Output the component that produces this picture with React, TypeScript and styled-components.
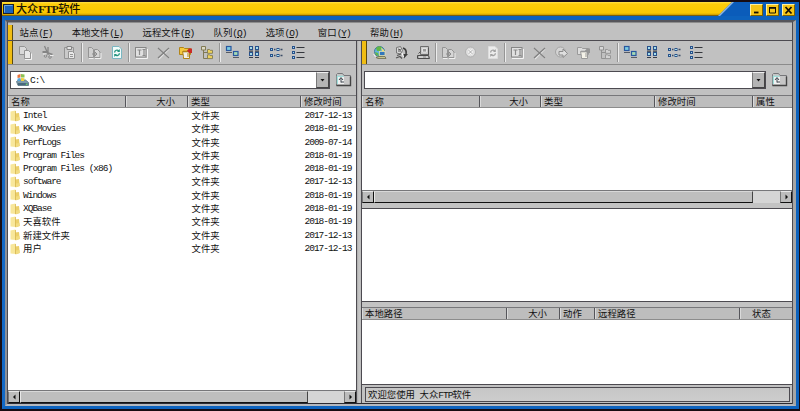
import React from 'react';
import styled, { createGlobalStyle, css } from 'styled-components';

const GlobalStyle = createGlobalStyle`
  * { box-sizing: border-box; }
  html, body { margin: 0; padding: 0; overflow: hidden; }
  body {
    font-family: "Noto Sans CJK SC", sans-serif;
    font-size: 9.4px;
    line-height: 13px;
    color: #111;
    background: #1a1214;
  }
`;

const face = '#c1c1c1';
const line = '#4c4a50';

const Window = styled.div`
  width: 800px;
  height: 411px;
  display: flex;
  flex-direction: column;
  background: #170c12;
  padding: 2px 1px 2px 2px;
`;

const TitleBar = styled.header`
  height: 14px;
  flex: none;
  display: flex;
  background: #0b5cba;
`;

const TitleCaption = styled.div`
  width: 732px;
  height: 14px;
  display: flex;
  align-items: center;
  padding-left: 1px;
  gap: 2px;
  background: linear-gradient(#ffe14a 0, #fccb0a 2px, #fac800 11px, #c99a00 13px, #2b2418 14px);
  clip-path: polygon(0 0, 730px 0, 716px 14px, 0 14px);
  font-weight: 500;
  font-size: 11.1px;
  line-height: 13px;
  color: #1c1503;
`;

const TitleText = styled.span`
  white-space: nowrap;
`;

const TitleLatin = styled.b`
  font-family: "Liberation Serif", serif;
  font-size: 11.4px;
  letter-spacing: -0.5px;
`;

const TitleEdge = styled.div`
  width: 16px;
  height: 14px;
  margin-left: -16px;
  background: #8fb4e2;
  clip-path: polygon(14px 0, 16px 0, 2px 14px, 0 14px);
`;

const WindowButtons = styled.div`
  display: flex;
  gap: 3px;
  padding: 2px 0 0 16px;
`;

const WindowButton = styled.button`
  width: 13px;
  height: 12px;
  padding: 0;
  border: 1px solid;
  border-color: #fff0a0 #7d6200 #7d6200 #fff0a0;
  background: #f5c518;
  display: flex;
  align-items: center;
  justify-content: center;
`;

const Frame = styled.div`
  flex: 1;
  min-height: 0;
  display: flex;
  background: #0d62bd;
  border: solid #0d62bd;
  border-width: 4px 3px 3px 3px;
  border-left-color: #1268c6;
`;

const Client = styled.div`
  flex: 1;
  display: flex;
  flex-direction: column;
  background: ${face};
  border: solid;
  border-width: 2px 3px 2px 2px;
  border-color: #55555b #a5a5a5 #b4b8bf #8c9098;
  box-shadow: inset 1px 0 0 ${line}, inset -1px 0 0 ${line}, inset 0 -1px 0 #2c2a30;
  padding: 0 1px 1px 1px;
`;

const Grip = styled.div`
  width: 5px;
  flex: none;
  align-self: stretch;
  background: #f0bd13;
  border-right: 1px solid #5b4a10;
`;

const MenuBar = styled.nav`
  height: 19px;
  flex: none;
  display: flex;
  align-items: stretch;
  border-top: 1px solid #8d8d8d;
  border-bottom: 1px solid ${line};
  padding-top: 2px;
`;

const MenuList = styled.div`
  display: flex;
  gap: 19.3px;
  padding-left: 6.5px;
  align-items: center;
  white-space: nowrap;
`;

const Latin = styled.span`
  font-family: "Liberation Mono", monospace;
  font-size: 9.5px;
  letter-spacing: -1.01px;
`;

const Workspace = styled.main`
  flex: 1;
  min-height: 0;
  display: flex;
`;

const Pane = styled.section<{ $width?: number }>`
  ${(p) => (p.$width ? css`width: ${p.$width}px; flex: none;` : css`flex: 1;`)}
  display: flex;
  flex-direction: column;
  min-width: 0;
`;

const Splitter = styled.div`
  width: 6px;
  flex: none;
  border: solid ${line};
  border-width: 0 1px;
  background: linear-gradient(90deg, #aaa, #c8c8c8 2px, #bcbcbc);
`;

const ToolBar = styled.div`
  height: 24px;
  flex: none;
  display: flex;
  align-items: center;
  border-bottom: 1px solid #8b8b8b;
`;

const Tools = styled.div`
  display: flex;
  align-items: center;
  padding: 0 0 1px 1px;
`;

const ToolButton = styled.button`
  width: 22px;
  height: 22px;
  padding: 0;
  border: 0;
  background: none;
  display: flex;
  align-items: center;
  justify-content: center;
`;

const Divider = styled.div`
  width: 2px;
  margin: 0 0.6px;
  height: 19px;
  border-left: 1px solid #959595;
  border-right: 1px solid #ececec;
`;

const AddressRow = styled.div`
  height: 30px;
  flex: none;
  display: flex;
  align-items: flex-start;
  padding: 6px 4px 0 2px;
  gap: 5px;
`;

const AddressBox = styled.div`
  flex: 1;
  height: 18px;
  display: flex;
  align-items: center;
  background: #fff;
  border: 1px solid ${line};
  padding-left: 4px;
  gap: 1px;
`;

const AddressText = styled.div`
  flex: 1;
`;

const DropButton = styled.button`
  width: 13px;
  height: 16px;
  padding: 0;
  border: solid;
  border-width: 1px;
  border-color: #f0f0f0 #444 #444 #777;
  background: #b4b4b4;
  display: flex;
  align-items: center;
  justify-content: center;
`;

const UpButton = styled.button`
  width: 17px;
  height: 17px;
  padding: 0;
  border: 0;
  background: none;
`;

const HeaderRow = styled.div<{ $columns: string }>`
  height: 13px;
  flex: none;
  display: grid;
  grid-template-columns: ${(p) => p.$columns};
  border-top: 1px solid #77777a;
  border-bottom: 1px solid #8c8c8c;
  background: #bdbdbd;
`;

const HeaderCell = styled.div<{ $pad?: number; $right?: boolean }>`
  border-right: 1px solid #55555a;
  box-shadow: inset 1px 0 0 #dadada;
  padding: 0 ${(p) => (p.$right ? 12 : 0)}px 0 ${(p) => p.$pad ?? 3}px;
  text-align: ${(p) => (p.$right ? 'right' : 'left')};
  line-height: 11px;
  white-space: nowrap;
  &:last-child { border-right: 0; }
`;

const FileList = styled.div`
  flex: 1;
  min-height: 0;
  background: #fff;
  padding-top: 1px;
`;

const FileRow = styled.div`
  height: 13.3px;
  line-height: 13.3px;
  display: grid;
  grid-template-columns: 183.5px 113px 1fr;
  white-space: nowrap;
`;

const FileName = styled.div`
  display: flex;
  align-items: center;
  padding-left: 2px;
  gap: 3px;
`;

const ScrollTrack = styled.div`
  height: 13px;
  flex: none;
  display: flex;
  justify-content: space-between;
  background: #d5d5d5;
  border-top: 1px solid #77777a;
`;

const ScrollArrow = styled.button`
  width: 12px;
  flex: none;
  padding: 0;
  border: 1px solid;
  border-color: #e8e8e8 #111 #111 #777;
  background: #bcbcbc;
  display: flex;
  align-items: center;
  justify-content: center;
`;

const ScrollThumb = styled.div<{ $width: number }>`
  width: ${(p) => p.$width}px;
  margin-right: auto;
  border: 1px solid;
  border-color: #d8d8d8 #444 #111 #e8e8e8;
  background: #bebebe;
`;

const Band = styled.div`
  height: 6px;
  flex: none;
  background: #c3c3c3;
  border-bottom: 1px solid ${line};
`;

const LogView = styled.div`
  height: 92px;
  flex: none;
  background: #fff;
`;

const QueueBand = styled.div`
  height: 6px;
  flex: none;
  background: #c3c3c3;
  border-top: 1px solid ${line};
`;

const Queue = styled.div`
  height: 64px;
  flex: none;
  background: #fff;
`;

const StatusBar = styled.footer`
  height: 19px;
  flex: none;
  background: #c1c1c1;
  border-top: 1px solid ${line};
  padding: 2px 2px 1px 3px;
`;

const StatusCell = styled.div`
  height: 15px;
  border: 1px solid ${line};
  background: linear-gradient(#c6c6c6, #cdcdcd);
  padding-left: 2px;
  line-height: 13px;
  white-space: pre;
`;

const Svg = styled.svg`
  display: block;
  overflow: visible;
`;

type IconName =
  | 'copy' | 'cut' | 'paste' | 'find' | 'refresh' | 'refreshOff' | 'rename' | 'delete'
  | 'props' | 'propsOff' | 'tree' | 'treeOff' | 'large' | 'small' | 'list' | 'detail'
  | 'globe' | 'plug' | 'host' | 'stop' | 'transfer';

const g = '#949494';

const gear = (page: string, ink: string, edge: string) => (
  <>
    <path d="M3.5 1.5h6.5l2.5 2.5v9.5h-9z" fill={page} stroke={edge} />
    <path d="M5.6 7.5a2.4 2.4 0 0 1 4.2-1.6M10.4 8.2a2.4 2.4 0 0 1-4.2 1.6" stroke={ink} strokeWidth="1.3" fill="none" />
    <path d="M10.8 4v3H8zM5.2 12V9H8z" fill={ink} />
  </>
);

const tree = (a: string, b: string, s: string) => (
  <>
    <path d="M3.5 5v8.5H8M3.5 7.5H8" stroke={s} fill="none" />
    <path d="M1.5 1.5h4v3.5h-4z" fill={a} stroke={s} />
    <path d="M7.5 4.500h2l.7.8h2.3v3h-5zM7.500 9.800h2l.7.8h2.3v3h-5z" fill={b} stroke={s} strokeWidth=".9" />
  </>
);

const props = (a: string, s: string, red: string) => (
  <>
    <path d="M1.5 2.5h4l1 1h6v6h-11z" fill={a} stroke={s} />
    <path d="M4.5 6.5h7v7h-6v-2z" fill="#f4f2e8" stroke={s} />
    <path d="M5 6.5h7" stroke={s} strokeWidth="1.6" />
    <path d="M9 5.5l2-2h3v4.5h-3z" fill={red} />
    <path d="M10 8v4" stroke={s} />
  </>
);

const box = (x: number, y: number, w: number, h: number) => (
  <rect key={`${x}-${y}`} x={x + 0.5} y={y + 0.5} width={w} height={h} fill="#a5dcea" stroke="#28518b" />
);

const iconArt: Record<IconName, React.ReactNode> = {
  copy: (
    <>
      <path d="M1.5 1.5h5l2 2v6h-7z" fill="#d9d9d9" stroke={g} />
      <path d="M6.5 5.5h4l2 2v6h-6z" fill="#e8e8e8" stroke={g} />
      <path d="M7 14.500h6.500v-6" stroke="#f5f5f5" fill="none" />
    </>
  ),
  cut: (
    <>
      <path d="M4.500 1l3.500 8M8 2v8" stroke="#858585" strokeWidth="1.3" />
      <path d="M2.500 7h5M8 8l4.500 1.500" stroke="#858585" strokeWidth="1.8" />
      <circle cx="5.500" cy="11" r="1.300" fill="none" stroke="#8b8b8b" />
      <circle cx="10" cy="12" r="1.300" fill="none" stroke="#8b8b8b" />
      <path d="M3 9h3M10 10.500h3.500" stroke="#eee" />
    </>
  ),
  paste: (
    <>
      <path d="M2.500 2.500h9v11h-9z" fill="#cacaca" stroke={g} />
      <path d="M5 1.500h4.500v3H5z" fill="#e4e4e4" stroke="#858585" />
      <path d="M6.500 6.500h4l2 2v5h-6z" fill="#e8e8e8" stroke={g} />
      <path d="M8 9.500h3M8 11.500h3" stroke={g} />
    </>
  ),
  find: (
    <>
      <path d="M1.500 2.500h3l2 2v8h-5z" fill="#cfcfcf" stroke={g} />
      <path d="M7.500 4.500h3l2.500 2.500v5.500H7.500z" fill="#d6d6d6" stroke={g} />
      <path d="M5 9h5M8 7l2 2-2 2" stroke="#8c8c8c" />
      <path d="M2 13.500h4.500M8 13.500h6V8" stroke="#f0f0f0" />
    </>
  ),
  refresh: gear('#f2fbfa', '#23947f', '#7ab7c2'),
  refreshOff: gear('#ececec', '#a2a2a2', '#dddddd'),
  rename: (
    <>
      <rect x="1.500" y="2.500" width="10.500" height="9.500" fill="#e1e1e1" stroke="#868686" />
      <path d="M3.500 5h4M5.500 5v5M8.500 4.500h3M10 4.500v6M8.500 10.500h3" stroke="#8b8b8b" strokeWidth="1.200" />
      <path d="M2 13.500h11.500V4" stroke="#f4f4f4" fill="none" />
    </>
  ),
  delete: (
    <>
      <path d="M3 4l10 9M13 4L3 14" stroke="#e4e4e4" strokeWidth="1.200" />
      <path d="M2 3l11 10M13 3L2 13" stroke="#808080" strokeWidth="1.300" />
    </>
  ),
  props: props('#f5ca3f', '#b28418', '#c92a28'),
  propsOff: props('#dddddd', '#9a9a9a', '#959595'),
  tree: tree('#dcd9c6', '#efd35a', '#817a55'),
  treeOff: tree('#d8d8d8', '#d3d3d3', '#929292'),
  large: (
    <>
      <rect x="1.500" y="1.500" width="4.500" height="4" fill="#7ccbe0" stroke="#2858a0" strokeWidth="1.200" />
      <path d="M1 7.500h6" stroke="#555b66" />
      <rect x="8.500" y="6.500" width="4.500" height="4" fill="#a5dbb4" stroke="#2858a0" strokeWidth="1.200" />
      <path d="M8 12.500h6" stroke="#555b66" />
    </>
  ),
  small: (
    <>
      {box(2, 1, 3, 3)}{box(8, 1, 3, 3)}{box(2, 7, 3, 3)}{box(8, 7, 3, 3)}
      <path d="M2 6.200h4M8 6.200h4M2 12.500h4M8 12.500h4" stroke="#343c49" strokeWidth="1.200" />
    </>
  ),
  list: (
    <>
      {box(1, 3, 2, 2)}{box(7.5, 3, 2, 2)}{box(1, 9, 2, 2)}{box(7.5, 9, 2, 2)}
      <path d="M5 4.500h1.500M11.500 4.500h2M5 10.500h1.500M11.500 10.500h2" stroke="#3b4c66" strokeWidth="1.300" />
    </>
  ),
  detail: (
    <>
      {box(1, 1, 2, 2)}{box(1, 6, 2, 2)}{box(1, 11, 2, 2)}
      <path d="M5.500 2.500h8M5.500 7.500h8M5.500 12.500h8" stroke="#34373d" />
    </>
  ),
  globe: (
    <>
      <circle cx="7.500" cy="6.500" r="5" fill="#63b3df" stroke="#407a9c" />
      <path d="M4 3q3-3 6-.5L8 6 5 6zM3 7l3 1 1 3-3-1z" fill="#62b746" />
      <path d="M9 2.500l3.500 3-2 2z" fill="#f0de70" />
      <rect x="7.500" y="6.500" width="5.500" height="4" fill="#3377bb" stroke="#e5e0b0" strokeWidth=".8" />
      <path d="M4 12.500l3-1h6l1 2H6z" fill="#c8c58f" stroke="#6b6a50" strokeWidth=".8" />
      <path d="M1.500 9l2 3" stroke="#eee" />
    </>
  ),
  plug: (
    <>
      <path d="M2.500 2.500l4-1 2 4-2 3.500-4-1z" fill="#d8d8d8" stroke="#777" />
      <path d="M4 4l3 1M4 6h3" stroke="#555" />
      <path d="M9 3q4 1.500 3 6" stroke="#3d3d3d" fill="none" strokeWidth="1.600" />
      <path d="M9.500 9H14l-4 4.500z" fill="#3d3d3d" />
      <path d="M3 10.500l4-1.500M2 13l4-1.500 2 2" stroke="#555" fill="none" strokeWidth="1.300" />
      <path d="M8 8l1.500 4" stroke="#fff" />
    </>
  ),
  host: (
    <>
      <path d="M4.500 1.500h8v8h-8z" fill="#c9c9c9" stroke="#6d6d6d" />
      <path d="M6.500 3.500h4v3.500h-4z" fill="#999" stroke="#eee" strokeWidth=".8" />
      <path d="M2.500 8.500l2-2M12.500 3v7" stroke="#555" fill="none" />
      <path d="M1.500 10.500h11l1 3H1.500z" fill="#aaa" stroke="#4c4c4c" />
      <path d="M3 12h4M10 12h2" stroke="#f1f1f1" />
    </>
  ),
  stop: (
    <>
      <circle cx="7.500" cy="7" r="5" fill="#dedede" stroke="#b0b0b0" />
      <path d="M5.500 5l4 4M9.500 5l-4 4" stroke="#fff" strokeWidth="2.200" />
      <path d="M5.500 5l4 4M9.500 5l-4 4" stroke="#9b9b9b" strokeWidth=".9" />
    </>
  ),
  transfer: (
    <>
      <circle cx="6.500" cy="7" r="5" fill="#d4d4d4" stroke="#a3a3a3" />
      <path d="M5 6.500h4V4l4.500 4.500-4.500 4V10H5z" fill="#dfdfdf" stroke="#8c8c8c" />
    </>
  ),
};

const Icon = ({ name }: { name: IconName }) => (
  <Svg width="15" height="15" viewBox="0 0 15 15" fill="none">{iconArt[name]}</Svg>
);

const FolderIcon = () => (
  <Svg width="10" height="12" viewBox="0 0 10 12">
    <path d="M0.500 1.500l5-1 .5 10.500-5.500-.5z" fill="#f8e79a" />
    <path d="M5 3.500l4-.5.800 7-4.300 1.500z" fill="#ecd06a" />
    <path d="M5.500 1v10" stroke="#d8b753" strokeWidth=".8" />
    <path d="M6 7.500l3.500-.5v3L6 11z" fill="#f2dc80" />
  </Svg>
);

const DriveIcon = () => (
  <Svg width="14" height="14" viewBox="0 0 14 14">
    <path d="M1.500 8.500l2-1.500h7l3 2.500v3H3z" fill="#7e9bab" stroke="#54707e" strokeWidth=".8" />
    <path d="M3 11h9.500" stroke="#3b5d73" strokeWidth="1.600" />
    <path d="M2.500 2l3-1v3.500L2.500 5z" fill="#e8733a" />
    <path d="M6 1l3.500.5v3L6 4.500z" fill="#8cc152" />
    <path d="M2.500 5.500L5.500 5v3h-3z" fill="#54a4dc" />
    <path d="M6 5l3.500.3L9 8H6z" fill="#f3cf3e" />
    <circle cx="11.500" cy="11.200" r=".8" fill="#6fe06a" />
  </Svg>
);

const UpFolderIcon = () => (
  <Svg width="17" height="17" viewBox="0 0 17 17">
    <path d="M1.500 5V3.500l1-1h5l1.500 2h6.500v10h-14z" fill="#c6c6c6" stroke="#77777a" />
    <path d="M2.500 13V5.500h6" stroke="#9fe0dc" fill="none" strokeWidth="1.500" />
    <path d="M3 6h6v7H3z" fill="#f2f2f2" />
    <path d="M6 11.500V7M4 9l2-2.500L8 9M6 11h3" stroke="#414850" fill="none" />
    <path d="M1.500 14.500h14v-9" stroke="#444" fill="none" strokeWidth="1.400" />
  </Svg>
);

const Arrow = ({ d }: { d: string }) => (
  <Svg width="5" height="6" viewBox="0 0 5 6"><path d={d} fill="#111" /></Svg>
);

const menus = [
  ['站点', 'F'], ['本地文件', 'L'], ['远程文件', 'R'], ['队列', 'Q'],
  ['选项', 'O'], ['窗口', 'Y'], ['帮助', 'H'],
];

const viewTools: IconName[] = ['large', 'small', 'list', 'detail'];
const localTools: IconName[][] = [
  ['copy', 'cut', 'paste'], ['find', 'refresh'], ['rename', 'delete', 'props', 'tree'], viewTools,
];
const remoteTools: IconName[][] = [
  ['globe', 'plug', 'host'], ['find', 'stop', 'refreshOff'],
  ['rename', 'delete', 'transfer', 'propsOff', 'treeOff'], viewTools,
];

const files = [
  ['Intel', '2017-12-13'], ['KK_Movies', '2018-01-19'], ['PerfLogs', '2009-07-14'],
  ['Program Files', '2018-01-19'], ['Program Files (x86)', '2018-01-19'],
  ['software', '2017-12-13'], ['Windows', '2018-01-19'], ['XQBase', '2018-01-19'],
  ['天喜软件', '2018-01-19'], ['新建文件夹', '2017-12-13'], ['用户', '2017-12-13'],
];

const ToolStrip = ({ groups }: { groups: IconName[][] }) => (
  <ToolBar>
    <Grip />
    <Tools>
      {groups.map((group, i) => (
        <React.Fragment key={i}>
          {i > 0 && <Divider />}
          {group.map((name) => (
            <ToolButton key={name}><Icon name={name} /></ToolButton>
          ))}
        </React.Fragment>
      ))}
    </Tools>
  </ToolBar>
);

const Address = ({ children }: { children?: React.ReactNode }) => (
  <AddressRow>
    <AddressBox>
      {children}
      <AddressText>{children ? <Latin>C:\</Latin> : null}</AddressText>
      <DropButton><Arrow d="M0.500 2h4L2.500 4.500z" /></DropButton>
    </AddressBox>
    <UpButton><UpFolderIcon /></UpButton>
  </AddressRow>
);

const Header = ({ columns, labels }: { columns: string; labels: string[] }) => (
  <HeaderRow $columns={columns}>
    {labels.map((label) => (
      <HeaderCell key={label} $right={label === '大小'} $pad={label === '状态' ? 12 : 3}>{label}</HeaderCell>
    ))}
  </HeaderRow>
);

const ScrollBar = ({ thumb }: { thumb: number }) => (
  <ScrollTrack>
    <ScrollArrow><Arrow d="M3.500 0.500v5L1 3z" /></ScrollArrow>
    <ScrollThumb $width={thumb} />
    <ScrollArrow><Arrow d="M1.500 0.500v5L4 3z" /></ScrollArrow>
  </ScrollTrack>
);

export default function App() {
  return (
    <>
      <GlobalStyle />
      <Window>
        <TitleBar>
          <TitleCaption>
            <Svg width="11" height="10" viewBox="0 0 11 10">
              <rect x=".5" y=".5" width="10" height="9" fill="#1a63bd" stroke="#1c2026" />
              <path d="M1.500 8.500v-7h8" stroke="#6da4e0" fill="none" />
            </Svg>
            <TitleText>大众<TitleLatin>FTP</TitleLatin>软件</TitleText>
          </TitleCaption>
          <TitleEdge />
          <WindowButtons>
            <WindowButton>
              <Svg width="9" height="8"><path d="M2 6.500h4.500" stroke="#151002" strokeWidth="1.800" /></Svg>
            </WindowButton>
            <WindowButton>
              <Svg width="9" height="8"><path d="M1.500 2v5h6V2z" fill="none" stroke="#151002" /><path d="M1 1.800h7" stroke="#151002" strokeWidth="1.600" /></Svg>
            </WindowButton>
            <WindowButton>
              <Svg width="9" height="8"><path d="M1.500 1l6 6.500M7.500 1l-6 6.500" stroke="#151002" strokeWidth="1.800" /></Svg>
            </WindowButton>
          </WindowButtons>
        </TitleBar>
        <Frame>
          <Client>
            <MenuBar>
              <Grip />
              <MenuList>
                {menus.map(([label, key]) => (
                  <span key={key}>{label}<Latin>(<u>{key}</u>)</Latin></span>
                ))}
              </MenuList>
            </MenuBar>
            <Workspace>
              <Pane $width={348}>
                <ToolStrip groups={localTools} />
                <Address><DriveIcon /></Address>
                <Header columns="118px 62px 113px 1fr" labels={['名称', '大小', '类型', '修改时间']} />
                <FileList>
                  {files.map(([name, date]) => (
                    <FileRow key={name}>
                      <FileName>
                        <FolderIcon />
                        {/^[\x20-\x7e]+$/.test(name) ? <Latin>{name}</Latin> : <span>{name}</span>}
                      </FileName>
                      <div>文件夹</div>
                      <Latin>{date}</Latin>
                    </FileRow>
                  ))}
                </FileList>
                <ScrollBar thumb={288} />
              </Pane>
              <Splitter />
              <Pane>
                <ToolStrip groups={remoteTools} />
                <Address />
                <Header columns="118px 61px 114px 98px 1fr" labels={['名称', '大小', '类型', '修改时间', '属性']} />
                <FileList />
                <ScrollBar thumb={379} />
                <Band />
                <LogView />
                <QueueBand />
                <Header columns="145px 53px 35px 145px 1fr" labels={['本地路径', '大小', '动作', '远程路径', '状态']} />
                <Queue />
                <StatusBar>
                  <StatusCell>欢迎您使用<Latin> </Latin>大众<Latin>FTP</Latin>软件</StatusCell>
                </StatusBar>
              </Pane>
            </Workspace>
          </Client>
        </Frame>
      </Window>
    </>
  );
}
